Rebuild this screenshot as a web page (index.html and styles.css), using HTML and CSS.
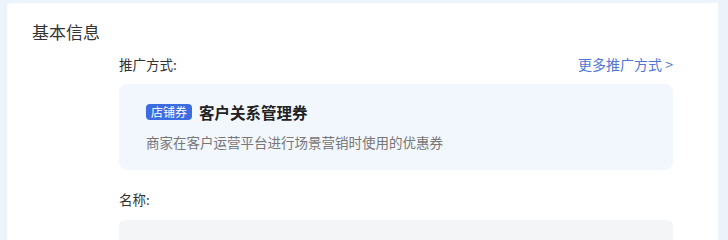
FILE: index.html
```html
<!DOCTYPE html>
<html lang="zh-CN">
<head>
<meta charset="utf-8">
<title>基本信息</title>
<link rel="stylesheet" href="styles.css">
</head>
<body>
<div class="page">
  <div class="card">
    <h2 class="card-title">基本信息</h2>
    <div class="form">
      <div class="row-head">
        <span class="label">推广方式:</span>
        <a class="more" href="#">更多推广方式 &gt;</a>
      </div>
      <div class="promo">
        <div class="promo-head">
          <span class="tag">店铺券</span>
          <span class="promo-name">客户关系管理券</span>
        </div>
        <div class="promo-desc">商家在客户运营平台进行场景营销时使用的优惠券</div>
      </div>
      <div class="label name-label">名称:</div>
      <div class="input"></div>
    </div>
  </div>
</div>
</body>
</html>
```
FILE: styles.css
```css
* { box-sizing: border-box; }
html, body {
  margin: 0;
  height: 100%;
  background: #edf3fb;
  font-family: "Noto Sans CJK SC", "Noto Sans", sans-serif;
  overflow: hidden;
}
.page {
  height: 100%;
  padding: 3px 10px 0 7px;
}
.card {
  background: #ffffff;
  height: 100%;
  padding: 17px 45px 0 25px;
  border-top-left-radius: 4px;
  overflow: hidden;
}
.card-title {
  margin: 0;
  font-size: 17px;
  line-height: 24px;
  font-weight: 400;
  color: #333;
}
.form {
  margin: 10px 0 0 87px;
}
.row-head {
  display: flex;
  justify-content: space-between;
  align-items: center;
  height: 20px;
}
.label {
  font-size: 13.5px;
  line-height: 20px;
  color: #333;
}
.more {
  font-size: 14px;
  line-height: 20px;
  color: #5077d4;
  text-decoration: none;
}
.promo {
  margin-top: 10px;
  background: #f2f6fd;
  border-radius: 8px;
  padding: 17px 27px 18px;
}
.promo-head {
  display: flex;
  align-items: center;
  gap: 7px;
  height: 22px;
}
.tag {
  background: #3b6ce2;
  color: #fff;
  font-size: 12px;
  line-height: 16px;
  padding: 0 5px;
  border-radius: 4px;
}
.promo-name {
  font-size: 15.5px;
  font-weight: 700;
  color: #222;
  line-height: 22px;
}
.promo-desc {
  margin-top: 9px;
  font-size: 13.5px;
  line-height: 20px;
  color: #777;
}
.name-label {
  margin-top: 19px;
}
.input {
  margin-top: 11px;
  height: 40px;
  background: #f4f5f7;
  border-radius: 6px;
}
```
